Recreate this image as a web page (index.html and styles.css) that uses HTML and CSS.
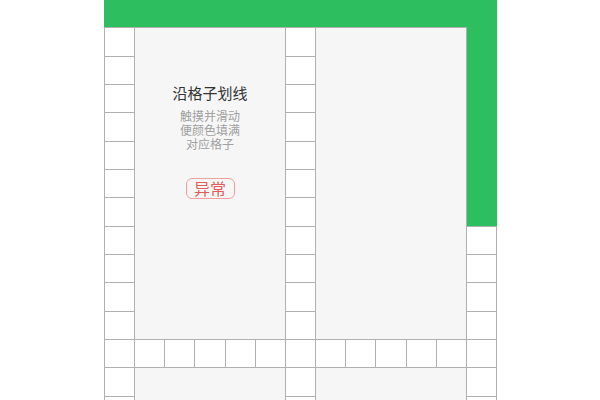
FILE: index.html
```html
<!DOCTYPE html>
<html lang="zh-CN">
<head>
    <meta charset="UTF-8">
    <title>划线</title>
    <link rel="stylesheet" href="styles.css">
    <script>
      // 空白格子由网格自动排进面板之外的位置
      window.onload = function(){
        var board = document.getElementById("board");
        var strArr = [];
        for (var i = 0; i < 45; i++) {
          strArr.push('<div class="cell"></div>');
        }
        board.insertAdjacentHTML("beforeend", strArr.join(""));
      };
    </script>
</head>
<body>

<div class="board" id="board">
    <div class="fill fill-top"></div>
    <div class="fill fill-side"></div>

    <div class="panel panel-a">
        <div class="panel-title">沿格子划线</div>
        <div class="panel-tip">触摸并滑动<br>便颜色填满<br>对应格子</div>
        <button class="btn-warn">异常</button>
    </div>
    <div class="panel panel-b"></div>
    <div class="panel panel-c"></div>
    <div class="panel panel-d"></div>
</div>

</body>
</html>
```

FILE: styles.css
```css
body {
    margin: 0;
    height: 400px;
    overflow: hidden;
    background: #fff;
    font-family: "Noto Sans CJK SC", "Noto Sans", sans-serif;
}

.board {
    display: grid;
    grid-template-columns: repeat(13, 1fr);
    grid-auto-rows: 27.33px;
    gap: 1px;
    width: 391px;
    margin: 0 0 0 104px;
    padding: 0 1px;
    background-color: #b0b0b0;
}

.cell {
    background-color: #fff;
}

.fill {
    background-color: #2dbe60;
}
.fill-top {
    grid-column: 1 / 13;
    grid-row: 1;
    margin: 0 -1px 0 -1px;
}
.fill-side {
    grid-column: 13;
    grid-row: 1 / 9;
    margin-right: -1px;
}

.panel {
    display: flex;
    flex-direction: column;
    align-items: center;
    background-color: #f6f6f6;
}
.panel-a {
    grid-column: 2 / 7;
    grid-row: 2 / 13;
    padding-top: 54.5px;
}
.panel-b {
    grid-column: 8 / 13;
    grid-row: 2 / 13;
}
.panel-c {
    grid-column: 2 / 7;
    grid-row: 14 / 16;
}
.panel-d {
    grid-column: 8 / 13;
    grid-row: 14 / 16;
}

.panel-title {
    font-size: 15px;
    line-height: 20px;
    color: #333;
}
.panel-tip {
    margin-top: 6.5px;
    font-size: 12px;
    line-height: 14px;
    color: #a0a0a0;
    text-align: center;
}

.btn-warn {
    margin-top: 27px;
    padding: 0 7.5px;
    height: 21px;
    border: 1px solid #efa09e;
    border-radius: 6px;
    background: transparent;
    font-family: inherit;
    font-size: 16px;
    line-height: 19px;
    color: #e25c5a;
}
```
